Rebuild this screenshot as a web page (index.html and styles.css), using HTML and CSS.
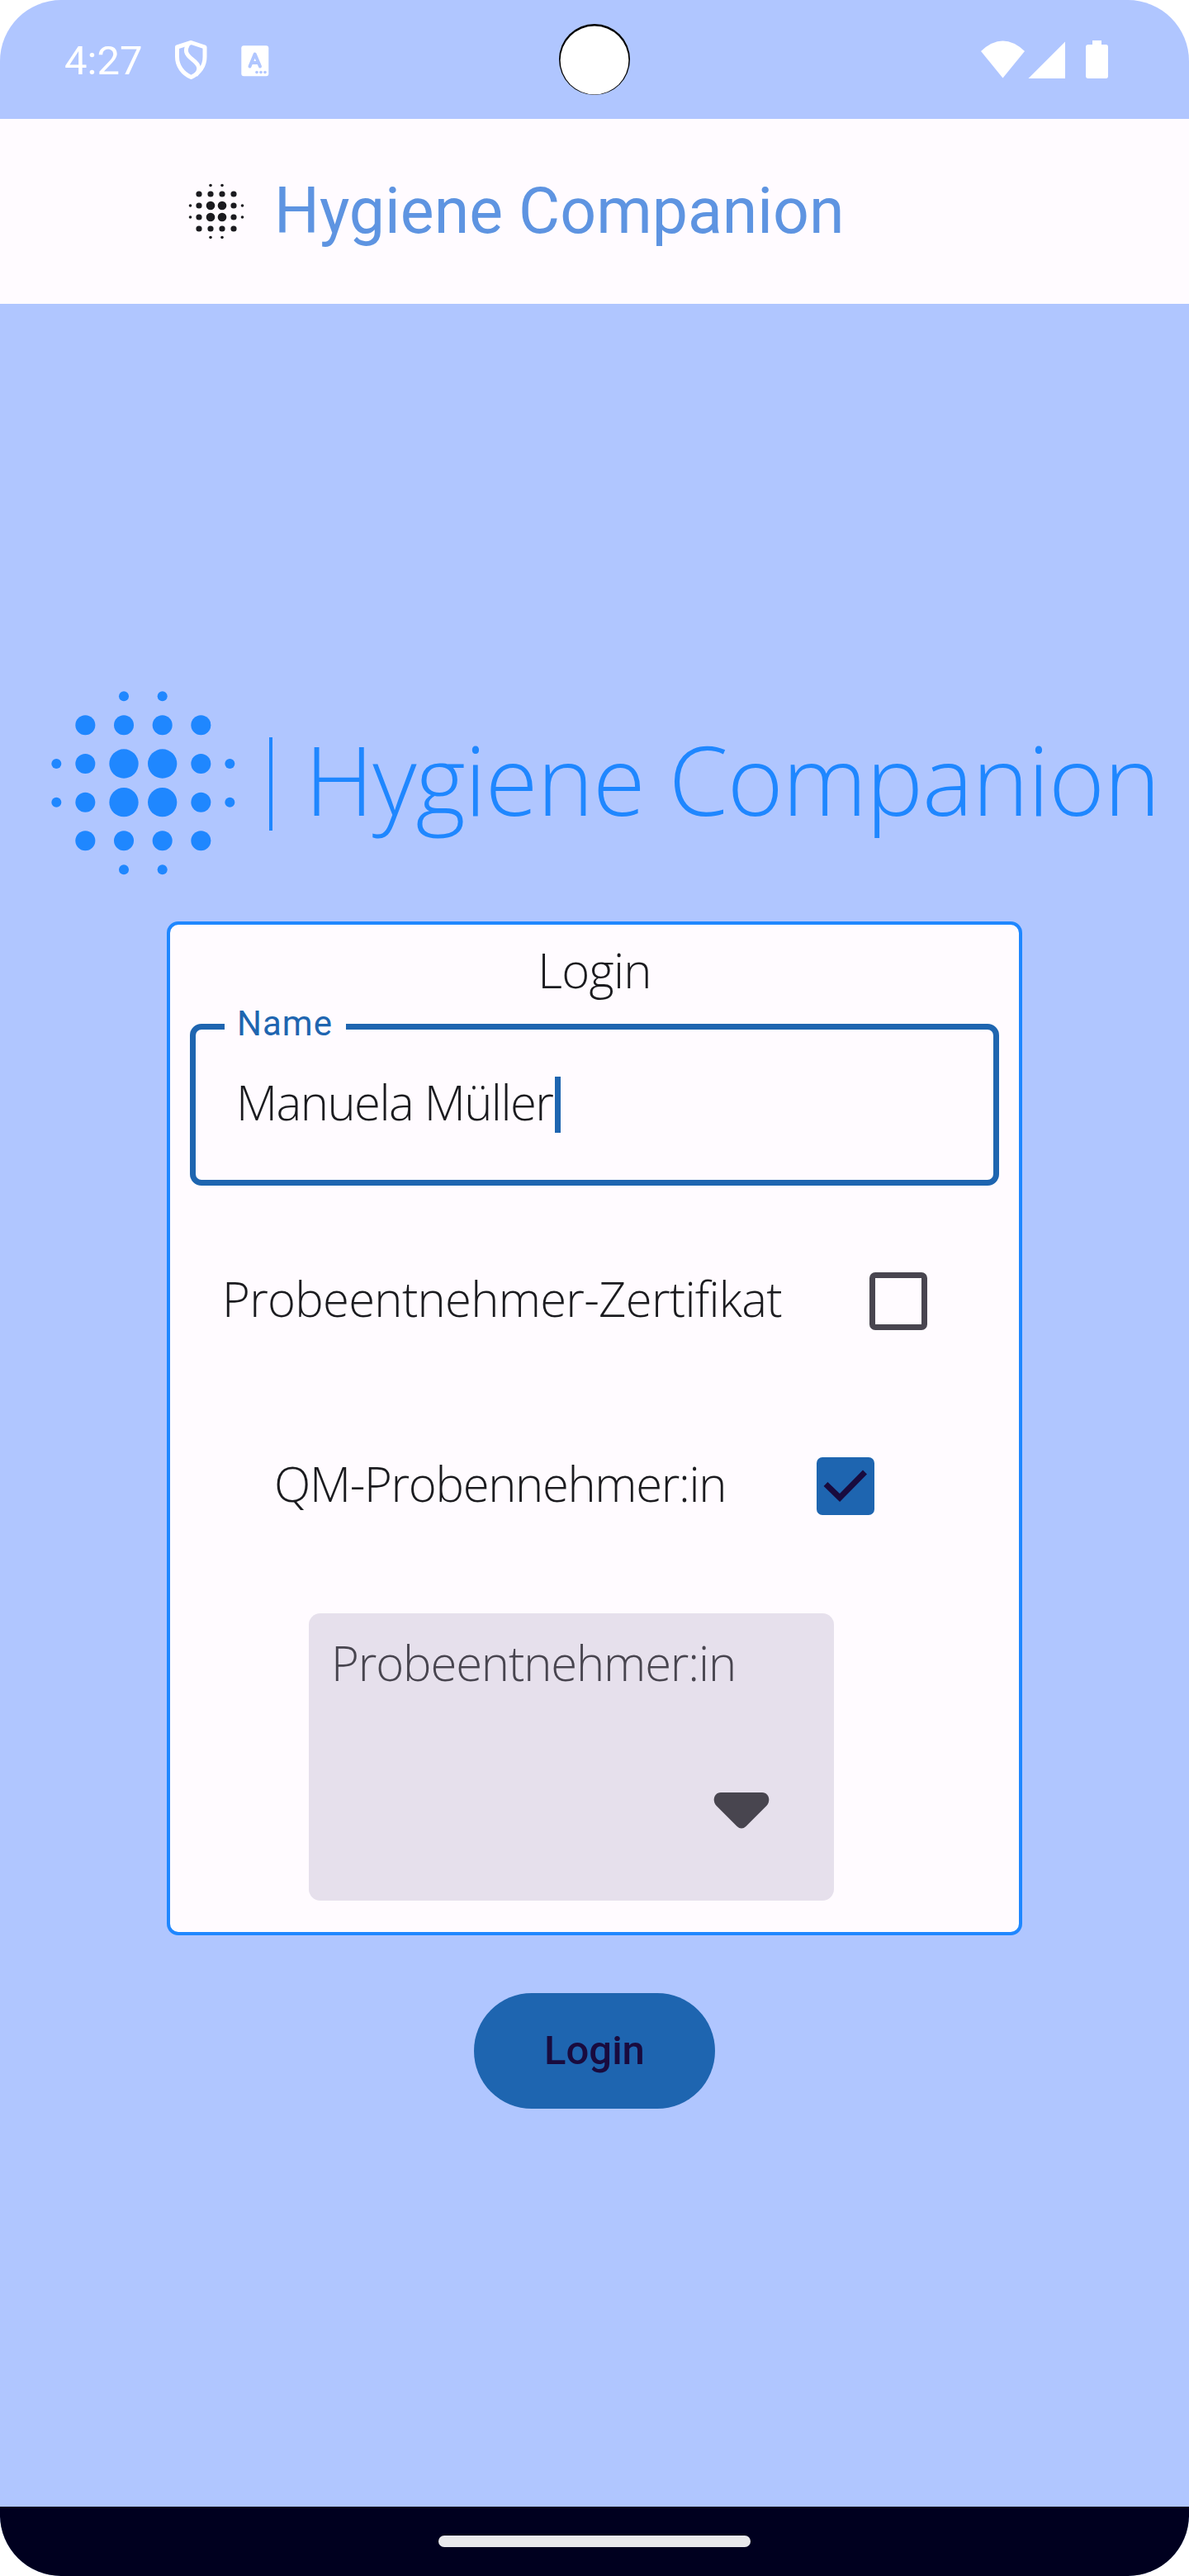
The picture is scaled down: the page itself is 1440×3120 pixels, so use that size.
FILE: index.html
```html
<!DOCTYPE html>
<html lang="de">
<head>
<meta charset="utf-8">
<title>Hygiene Companion</title>
<link rel="stylesheet" href="styles.css">
</head>
<body>
<svg width="0" height="0" class="defs">
  <symbol id="dots" viewBox="-34 -34 68 68">
    <g><circle cx="-7" cy="-31.5" r="1.8"/><circle cx="7" cy="-31.5" r="1.8"/><circle cx="-7" cy="31.5" r="1.8"/><circle cx="7" cy="31.5" r="1.8"/><circle cx="-31.5" cy="-7" r="1.8"/><circle cx="-31.5" cy="7" r="1.8"/><circle cx="31.5" cy="-7" r="1.8"/><circle cx="31.5" cy="7" r="1.8"/></g>
    <g><circle cx="-21" cy="-21" r="3.6"/><circle cx="-7" cy="-21" r="3.6"/><circle cx="7" cy="-21" r="3.6"/><circle cx="21" cy="-21" r="3.6"/><circle cx="-21" cy="-7" r="3.6"/><circle cx="21" cy="-7" r="3.6"/><circle cx="-21" cy="7" r="3.6"/><circle cx="21" cy="7" r="3.6"/><circle cx="-21" cy="21" r="3.6"/><circle cx="-7" cy="21" r="3.6"/><circle cx="7" cy="21" r="3.6"/><circle cx="21" cy="21" r="3.6"/></g>
    <g><circle cx="-7" cy="-7" r="5.3"/><circle cx="7" cy="-7" r="5.3"/><circle cx="-7" cy="7" r="5.3"/><circle cx="7" cy="7" r="5.3"/></g>
  </symbol>
</svg>
<div class="phone">
  <header class="status">
    <span class="time">4:27</span>
    <svg class="shield" width="40" height="50" viewBox="0 0 40 50"><path d="M20.500 3.500 37 9V21C37 32 30.500 41 20.500 45.500 10.500 41 3.500 32 3.500 21V9Z" fill="none" stroke="#fff" stroke-width="5" stroke-linejoin="round"/><path d="M17.500 4.500C12 13 14 18 22 24 31 31 32 36 26 43" fill="none" stroke="#fff" stroke-width="5"/></svg>
    <svg class="lang" width="34" height="38" viewBox="0 0 34 38"><rect x=".3" y=".3" width="33" height="37" rx="3" fill="#fff"/><path d="M10.500 25.500 16.700 10.500 23 25.500M12.500 21H21" fill="none" stroke="#b0c6ff" stroke-width="4" stroke-linecap="round" stroke-linejoin="round"/><g fill="#b0c6ff"><circle cx="19" cy="32.500" r="1.800"/><circle cx="24" cy="32.500" r="1.800"/><circle cx="29" cy="32.500" r="1.800"/></g></svg>
    <svg class="camera" width="88" height="88" viewBox="0 0 88 88"><circle cx="44" cy="44" r="43"/><circle cx="44" cy="45" r="41.400" fill="#fff"/></svg>
    <svg class="signals" width="156" height="48" viewBox="0 0 156 48" fill="#fff"><path d="M0 14Q26.500-11 53 14L26.500 46.500Z"/><path d="M102 2.500V47H57.500Z"/><path d="M135 1H146V6H151.500Q154 6 154 9V44Q154 47 151.500 47H130Q127 47 127 44V9Q127 6 130 6H135Z"/></svg>
  </header>
  <div class="appbar">
    <svg class="mark"><use href="#dots"/></svg>
    <h1 class="title">Hygiene Companion</h1>
  </div>
  <main class="content">
    <div class="brand">
      <svg class="brand-mark"><use href="#dots"/></svg>
      <span class="bar"></span>
      <span class="brand-name">Hygiene Companion</span>
    </div>
    <section class="card">
      <h2 class="light heading">Login</h2>
      <div class="field">
        <span class="label">Name</span>
        <span class="light value">Manuela Müller</span><span class="cursor"></span>
      </div>
      <div class="row row-cert">
        <span class="light cert">Probeentnehmer-Zertifikat</span>
        <span class="box"></span>
      </div>
      <div class="row row-qm">
        <span class="light qm">QM-Probennehmer:in</span>
        <span class="box checked"><svg width="70" height="70" viewBox="0 0 70 70"><path d="M11 32.500 28 49 58.500 18" fill="none" stroke="#190b3e" stroke-width="7"/></svg></span>
      </div>
      <div class="select">
        <span class="light option">Probeentnehmer:in</span>
        <svg class="arrow" width="68" height="44" viewBox="0 0 68 44"><path d="M9 0H59C67 0 70 10 64.500 16L39.500 41Q34 46 28.500 41L3.500 16C-2 10 1 0 9 0Z"/></svg>
      </div>
    </section>
    <button class="login">Login</button>
  </main>
  <footer class="nav"><span class="pill"></span></footer>
</div>
</body>
</html>
```
FILE: styles.css
```css
* { box-sizing: border-box; }
body { margin: 0; background: #fff; font-family: Roboto, sans-serif; }
.defs { position: absolute; }
.phone { width: 1440px; height: 3120px; background: #b0c6ff; border-radius: 74px; overflow: hidden; display: flex; flex-direction: column; }
.status { position: relative; height: 144px; display: flex; align-items: center; padding-left: 78px; flex: none; }
.time { width: 133px; font-size: 49px; line-height: 60px; color: #fff; padding-top: 4px; }
.shield { margin-top: 2px; }
.lang { margin: 3px 0 0 41px; }
.camera { position: absolute; left: 676px; top: 28px; }
.signals { margin: 0 96px 0 auto; }
.appbar { height: 224px; flex: none; background: #fffbff; display: flex; align-items: center; padding-left: 228px; }
.mark { width: 68px; height: 68px; fill: #1b1b1f; }
.title { margin: 0 0 0 36px; font-size: 77px; font-weight: 400; line-height: 90px; color: #5e94e1; white-space: nowrap; }
.content { flex: 1; display: flex; flex-direction: column; align-items: center; padding-top: 466.500px; }
.brand { width: 1440px; height: 226.700px; flex: none; display: flex; align-items: center; padding-left: 59.700px; color: #1f87ff; margin-bottom: 54.800px; }
.brand-mark { width: 226.700px; height: 226.700px; fill: #1f87ff; flex: none; }
.bar { width: 4px; height: 113px; margin: 3px 0 0 39.500px; background: #1f87ff; flex: none; }
.brand-name { margin-left: 39px; padding-bottom: 10px; font: 300 116px/140px "Open Sans", sans-serif; letter-spacing: -1.050px; white-space: nowrap; }
.light { font: 300 58px/70px "Open Sans", sans-serif; color: #1b1b1f; white-space: nowrap; }
.card { width: 1036px; height: 1228px; flex: none; background: #fffbff; border: 4px solid #1f87ff; border-radius: 14px; display: flex; flex-direction: column; padding: 20px 24px; }
.heading { margin: 0; text-align: center; height: 100px; letter-spacing: -0.700px; }
.field { position: relative; height: 196px; width: 980px; border: 7px solid #1e65b0; border-radius: 14px; display: flex; align-items: center; padding-left: 49px; }
.label { position: absolute; left: 35px; top: -32px; width: 147px; padding-left: 15px; font-size: 42px; line-height: 50px; letter-spacing: 1px; color: #1e65b0; background: #fffbff; }
.value { width: 386px; padding-bottom: 5px; letter-spacing: -1.550px; }
.cursor { width: 7px; height: 68px; background: #1e65b0; }
.row { display: flex; align-items: center; justify-content: space-between; height: 70px; }
.row .light { padding-bottom: 5px; }
.row-cert { margin: 105px 87px 0 39px; }
.row-qm { margin: 154px 151px 0 102px; }
.cert { letter-spacing: -0.730px; }
.qm { letter-spacing: -1.350px; }
.box { width: 70px; height: 70px; border: 7px solid #48454f; border-radius: 7px; flex: none; }
.checked { border: 0; background: #1e65b0; }
.checked svg { display: block; }
.select { width: 636px; height: 348px; margin: 119px 0 0 144px; background: #e6e0ec; border-radius: 14px; padding: 25px 27px; display: flex; flex-direction: column; }
.option { color: #48454f; letter-spacing: -1.150px; }
.arrow { fill: #48454f; margin: 122px 0 0 463px; }
.login { width: 292px; height: 140px; flex: none; margin-top: 70px; border: 0; border-radius: 70px; background: #1e65b0; color: #190b3e; font: 500 49px/60px Roboto, sans-serif; }
.nav { height: 84px; flex: none; background: #00001f; display: flex; justify-content: center; padding-top: 35px; }
.pill { width: 378px; height: 14px; border-radius: 7px; background: #e9e9eb; }
```
